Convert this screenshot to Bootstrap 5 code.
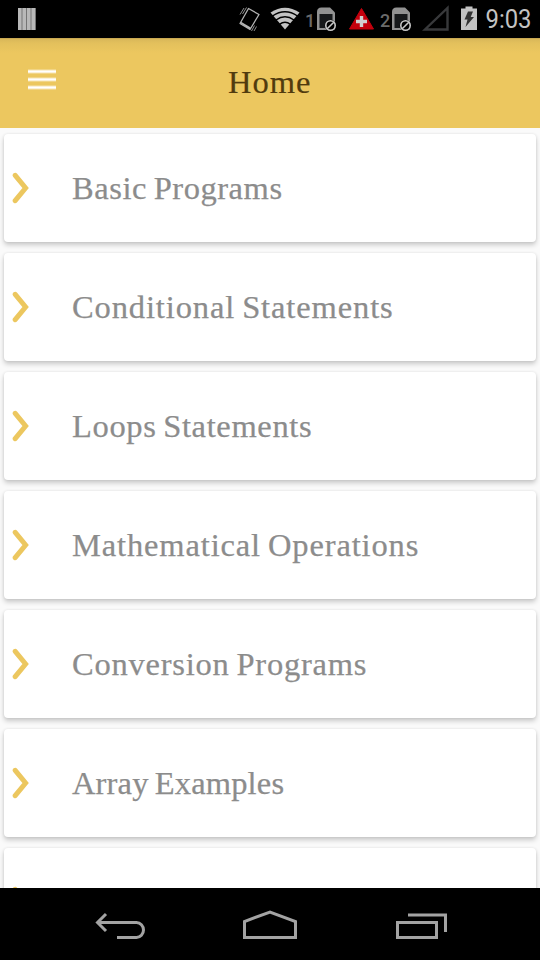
<!DOCTYPE html>
<html lang="en">
<head>
<meta charset="utf-8">
<meta name="viewport" content="width=device-width, initial-scale=1">
<title>Home</title>
<link href="https://cdn.jsdelivr.net/npm/bootstrap@5.3.0/dist/css/bootstrap.min.css" rel="stylesheet">
<style>
html, body { height: 100%; }
body { background: #fafafa; font-family: "Liberation Serif", serif; }
.screen { width: 540px; height: 960px; }
.status-bar { height: 38px; }
.app-bar { height: 90px; background: linear-gradient(#b99b4b 0, #d9b759 1px, #e3c05c 5px, #ecc75f 15px); }
.menu-btn { width: 56px; height: 48px; margin: 17px 0 0 14px; }
.app-title { font-size: 32.5px; line-height: 40px; letter-spacing: 1px; color: #513b0e; margin: 24px 0 0 158px; -webkit-text-stroke: .2px #513b0e; }
.topics { padding: 6px 4px 0; gap: 11px; min-height: 0; }
.topic { height: 108px; border: 0; border-radius: 4px; box-shadow: 0 3px 5px rgba(0,0,0,.2), 0 0 3px rgba(0,0,0,.08); }
.topic-name { font-size: 32.5px; line-height: 40px; color: #8c8c8c; margin-left: 42px; white-space: nowrap; word-spacing: -2px; -webkit-text-stroke: .25px #8c8c8c; }
.ls-basic { letter-spacing: .55px; }
.ls-cond { letter-spacing: .88px; }
.ls-loop { letter-spacing: .64px; }
.ls-math { letter-spacing: .86px; }
.ls-conv { letter-spacing: .77px; }
.ls-array { letter-spacing: .15px; }
.chevron { margin-left: 8px; }
.nav-keys { height: 72px; }
svg { display: block; }
svg text { font-family: Roboto, sans-serif; }
</style>
<script src="https://cdn.jsdelivr.net/npm/bootstrap@5.3.0/dist/js/bootstrap.bundle.min.js"></script>
</head>
<body>
<div class="screen d-flex flex-column overflow-hidden">
  <div class="status-bar bg-black flex-shrink-0">
    <svg width="540" height="38" viewBox="0 0 540 38" aria-label="Status bar">
      <rect x="18" y="8" width="18" height="22" fill="#b8b8b8"/>
      <path d="M22 8v22M26.500 8v22M31 8v22M35.500 8v22" stroke="#747474"/>
      <g fill="none" stroke="#b4b4b4">
        <path d="M248.500 8.500 259 14.500 250 29.500 240 23.500Z" stroke-width="1.300" stroke-linejoin="round"/>
        <path d="M240 23l1-1.300 9.800 5.800-1 2Z" fill="#b4b4b4" stroke="none"/>
        <path d="M240 14.500l4-6.500M242.500 14l4-6.500M251.500 31l3-5.500M254 31l2.500-4.500" stroke-width=".8"/>
      </g>
      <path d="M285 29.500 270.500 12.500Q285 3 299.500 12.500Z" fill="#c3c3c3"/>
      <path d="M272.500 16Q285 7.500 297.500 16M276 20Q285 13.500 294 20M279.500 24.300Q285 20 290.500 24.300" fill="none" stroke="#000" stroke-width="1.500"/>
      <text x="305" y="27" font-size="18" font-weight="500" fill="#6b6b6b">1</text>
      <g id="sim">
        <path d="M317 30V12q0-4.500 4.500-4.500H330l5 5V30Z" fill="#929292"/>
        <path d="M319.500 14h13v14h-13Z" fill="#17191b"/>
        <circle cx="330.500" cy="25.500" r="5.800" fill="#000"/>
        <circle cx="330.500" cy="25.500" r="4.700" fill="none" stroke="#c9c9c9" stroke-width="1.600"/>
        <path d="M327.200 28.800l6.600-6.600" stroke="#c9c9c9" stroke-width="1.600"/>
      </g>
      <path d="M361.500 8.500 373.500 29h-24Z" fill="#c4000d" stroke="#c4000d" stroke-linejoin="round"/>
      <path d="M361.500 16v11M356 21.500h11" stroke="#d0d0d0" stroke-width="3.400"/>
      <text x="380" y="27" font-size="18" font-weight="500" fill="#6b6b6b">2</text>
      <use href="#sim" x="75"/>
      <path d="M447.500 8v21.500h-22.500Z" fill="none" stroke="#38393b" stroke-width="2.400"/>
      <path d="M461 8.500h4.500V6.500h7v2h4.500V30h-16Z" fill="#c3c3c3"/>
      <path d="M468 11.500h5l-2.300 5.500h3.300l-8.500 10 2-7.500h-3Z" fill="#333"/>
      <text x="485.500" y="28" font-size="25" fill="#c3c3c3" textLength="46" lengthAdjust="spacingAndGlyphs">9:03</text>
    </svg>
  </div>
  <header class="app-bar d-flex align-items-start flex-shrink-0">
    <button type="button" class="menu-btn btn border-0 p-0 flex-shrink-0" aria-label="Menu">
      <svg width="56" height="48" viewBox="0 0 56 48"><path d="M14 16.500h28M14 24.500h28M14 32.500h28" stroke="#fff" stroke-opacity=".5" stroke-width="4"/><path d="M14 16.500h28M14 24.500h28M14 32.500h28" stroke="#fff" stroke-width="2"/></svg>
    </button>
    <h1 class="app-title fw-normal">Home</h1>
  </header>
  <main class="topics d-flex flex-column flex-grow-1 overflow-hidden">
    <div class="topic card flex-row align-items-center flex-shrink-0">
      <svg class="chevron" width="18" height="34" viewBox="0 0 18 34"><path id="chev" d="M7.200 4.300" fill="none"/><path id="chevron-shape" d="M7.200 4.300 17.600 17 7.200 29.700" transform="translate(-4 0)" fill="none" stroke="#ecc75f" stroke-width="5" stroke-linecap="round"/></svg>
      <span class="topic-name ls-basic">Basic Programs</span>
    </div>
    <div class="topic card flex-row align-items-center flex-shrink-0">
      <svg class="chevron" width="18" height="34"><use href="#chevron-shape"/></svg>
      <span class="topic-name ls-cond">Conditional Statements</span>
    </div>
    <div class="topic card flex-row align-items-center flex-shrink-0">
      <svg class="chevron" width="18" height="34"><use href="#chevron-shape"/></svg>
      <span class="topic-name ls-loop">Loops Statements</span>
    </div>
    <div class="topic card flex-row align-items-center flex-shrink-0">
      <svg class="chevron" width="18" height="34"><use href="#chevron-shape"/></svg>
      <span class="topic-name ls-math">Mathematical Operations</span>
    </div>
    <div class="topic card flex-row align-items-center flex-shrink-0">
      <svg class="chevron" width="18" height="34"><use href="#chevron-shape"/></svg>
      <span class="topic-name ls-conv">Conversion Programs</span>
    </div>
    <div class="topic card flex-row align-items-center flex-shrink-0">
      <svg class="chevron" width="18" height="34"><use href="#chevron-shape"/></svg>
      <span class="topic-name ls-array">Array Examples</span>
    </div>
    <div class="topic card flex-row align-items-center flex-shrink-0">
      <svg class="chevron" width="18" height="34"><use href="#chevron-shape"/></svg>
    </div>
  </main>
  <nav class="nav-keys bg-black flex-shrink-0" aria-label="System navigation">
    <svg width="540" height="72" viewBox="0 0 540 72" fill="none" stroke="#a3a3a3" stroke-width="3">
      <path d="M98 34.500h38.500a7 7.500 0 0 1 0 15H117M106 26 97.500 34.500 106 43"/>
      <path d="M244.500 49.500V33.500L270 24l25.500 9.500v16Z"/>
      <path d="M397.500 34.500h39v15h-39ZM408 27h37.500v17"/>
    </svg>
  </nav>
</div>
</body>
</html>
